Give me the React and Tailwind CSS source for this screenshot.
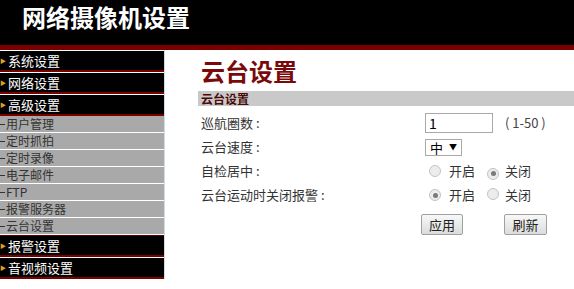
import React from 'react';

const font = { fontFamily: '"Noto Sans CJK SC", "Liberation Sans", sans-serif' };

const topMenu = ['系统设置', '网络设置', '高级设置'];
const subMenu = ['用户管理', '定时抓拍', '定时录像', '电子邮件', 'FTP', '报警服务器', '云台设置'];
const bottomMenu = ['报警设置', '音视频设置'];

const BlackItem = ({ label, first }) => (
  <div className={`border-t ${first ? 'border-[#5a0000]' : 'border-white'}`}>
    <div className='h-[19px] bg-black border-b-2 border-[#7a0000] box-content flex items-center text-white text-[13px] leading-[16px]'>
      <span className='text-[#e0a020] text-[6px] mr-[2px]'>▶</span>
      {label}
    </div>
  </div>
);

const GrayItem = ({ label }) => (
  <div className='h-[17px] bg-[#a9a9a9] border-b border-white flex items-center text-[#333] text-[12px] leading-[14px]'>
    <span className='inline-block w-[5px] h-px bg-[#333] mr-[1px]'></span>
    {label}
  </div>
);

const Radio = ({ checked }) => (
  <span className='inline-flex items-center justify-center w-[12px] h-[12px] rounded-full border border-[#c4c4c4] bg-[#ececec]'>
    {checked && <span className='w-[5px] h-[5px] rounded-full bg-[#7a7a7a]'></span>}
  </span>
);

const RadioPair = ({ on }) => (
  <div className='flex items-center text-[13px] text-[#333] pl-[4px]'>
    <Radio checked={on} />
    <span className='ml-[8px]'>开启</span>
    <span className='ml-[12px]'><Radio checked={!on} /></span>
    <span className='ml-[6px]'>关闭</span>
  </div>
);

export default function App() {
  return (
    <div className='w-[574px] h-[289px] overflow-hidden bg-white' style={font}>
      <div className='h-[50px] bg-black border-b-[5px] border-[#7a0000] box-border pl-[22px] flex items-start'>
        <h1 className='text-white text-[24px] font-bold leading-[32px] pt-px'>网络摄像机设置</h1>
      </div>
      <div className='flex'>
        <div className='w-[165px] border-r border-[#cfdbe6] shrink-0'>
          {topMenu.map((m) => <BlackItem key={m} label={m} />)}
          {subMenu.map((m) => <GrayItem key={m} label={m} />)}
          {bottomMenu.map((m, i) => <BlackItem key={m} label={m} first={i === 0} />)}
        </div>
        <div className='flex-1 pl-[33px] pt-[5px]'>
          <h2 className='text-[#7a0a0a] text-[24px] font-bold leading-[32px] pl-[3px]'>云台设置</h2>
          <div className='mt-[4px] h-[15px] bg-[#c9c9c9] flex items-center pl-[3px] text-[12px] font-bold text-[#4a0a0a] leading-none'>
            云台设置
          </div>
          <div className='mt-[5px] grid grid-cols-[224px_1fr] auto-rows-[24px] items-center text-[13px] text-[#333] pl-[3px]'>
            <div>巡航圈数 :</div>
            <div className='flex items-center'>
              <input defaultValue='1' className='w-[68px] h-[20px] border border-[#a9a9a9] px-[3px] text-[14px] text-black outline-none' />
              <span className='ml-[12px] text-[13px] text-[#444]'>( 1-50 )</span>
            </div>
            <div>云台速度 :</div>
            <div className='flex'>
              <div className='w-[37px] h-[17px] border border-[#a9a9a9] flex items-center pl-[4px] text-[13px] text-black leading-none'>
                中<span className='ml-[6px] text-[8px]'>▼</span>
              </div>
            </div>
            <div>自检居中 :</div>
            <RadioPair on={false} />
            <div>云台运动时关闭报警 :</div>
            <RadioPair on={true} />
          </div>
          <div className='mt-[7px] flex pl-[223px]'>
            <button className='w-[42px] h-[21px] border border-[#a0a0a0] rounded-[2px] bg-gradient-to-b from-[#f8f8f8] to-[#dcdcdc] text-[13px] text-[#222]'>应用</button>
            <button className='ml-[41px] w-[43px] h-[21px] border border-[#a0a0a0] rounded-[2px] bg-gradient-to-b from-[#f8f8f8] to-[#dcdcdc] text-[13px] text-[#222]'>刷新</button>
          </div>
        </div>
      </div>
    </div>
  );
}
